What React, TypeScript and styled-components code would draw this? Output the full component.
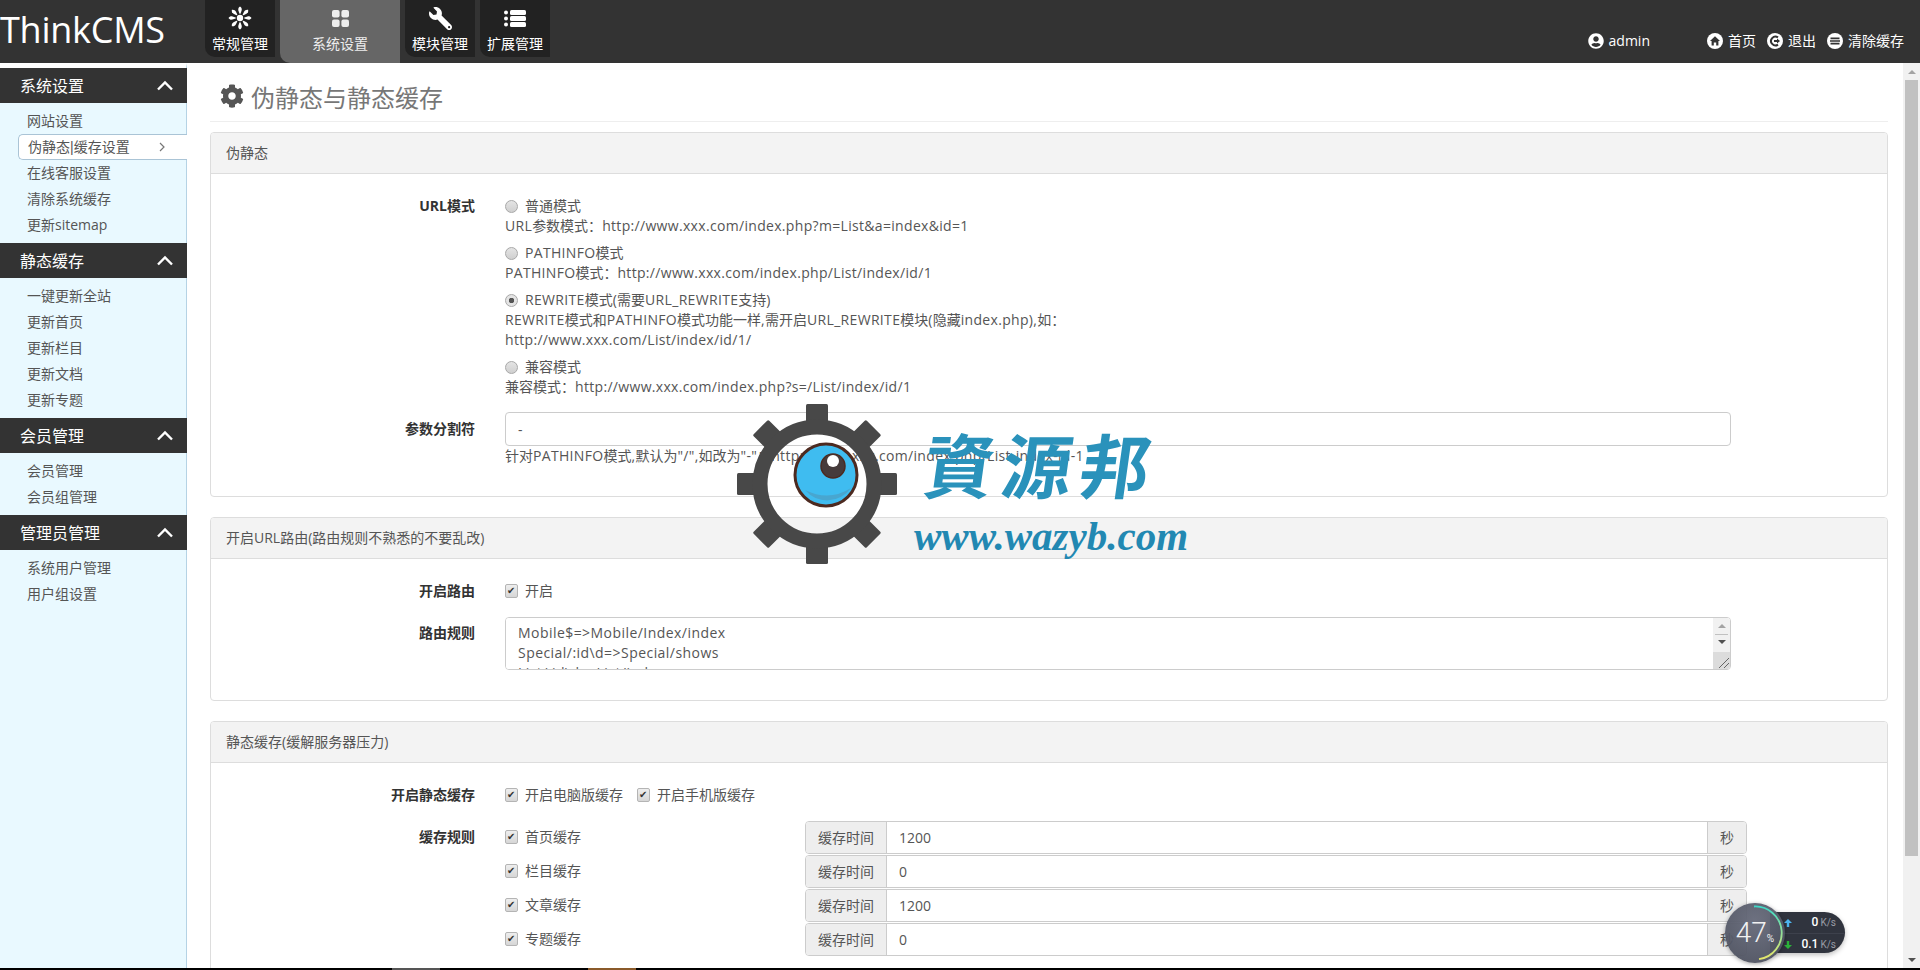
import { Fragment } from 'react'
import { createGlobalStyle, styled } from 'styled-components'
import { FaCog, FaUserCircle, FaWrench } from 'react-icons/fa'

const GlobalStyle = createGlobalStyle`
  html, body {
    margin: 0;
    height: 100%;
    overflow: hidden;
    background: #fff;
  }
  body {
    font-family: "Open Sans", "Noto Sans CJK SC", sans-serif;
    font-size: 14px;
    line-height: 20px;
    color: #555;
  }
  * {
    box-sizing: border-box;
  }
`

const Page = styled.div`
  position: relative;
  display: flex;
  flex-direction: column;
  height: 970px;
  overflow: hidden;
`

const Header = styled.header`
  display: flex;
  flex: none;
  height: 63px;
  background: #333;
  color: #fff;
`

const Logo = styled.div`
  flex: none;
  width: 205px;
  font-size: 36px;
  line-height: 59px;
  letter-spacing: -0.25px;
  color: #fff;
`

const NavTabs = styled.nav`
  display: flex;
  align-items: flex-start;
  gap: 5px;
`

const NavTab = styled.a<{ $active?: boolean }>`
  display: flex;
  flex-direction: column;
  align-items: center;
  width: ${({ $active }) => ($active ? '120px' : '70px')};
  height: ${({ $active }) => ($active ? '63px' : '57px')};
  padding-top: 6px;
  background: ${({ $active }) => ($active ? '#666' : '#222')};
  border-bottom-left-radius: 10px;
  color: ${({ $active }) => ($active ? '#eee' : '#fff')};
  font-size: 14px;
  line-height: 20px;
`

const NavIcon = styled.span`
  display: flex;
  align-items: center;
  justify-content: center;
  height: 24px;
  margin-bottom: 4px;
`

const FlippedWrench = styled(FaWrench)`
  transform: scaleX(-1);
`

const UserMenu = styled.div`
  display: flex;
  align-items: center;
  height: 20px;
  margin: 31px 16px 0 auto;
  color: #fff;
`

const MenuLink = styled.a<{ $gap?: number }>`
  display: flex;
  align-items: center;
  gap: 5px;
  margin-left: ${({ $gap }) => $gap ?? 11}px;
`

const Body = styled.div`
  display: flex;
  flex: 1;
  min-height: 0;
`

const Sidebar = styled.aside`
  flex: none;
  width: 187px;
  background: #e9f9ff;
  border-top: 5px solid #fff;
  border-right: 1px solid #b5d3e5;
`

const SideHeading = styled.div`
  display: flex;
  align-items: center;
  justify-content: space-between;
  height: 35px;
  margin-right: -1px;
  padding: 0 13px 0 20px;
  background: #333;
  color: #fff;
  font-size: 16px;
`

const SideList = styled.ul`
  list-style: none;
  margin: 0;
  padding: 5px 0;
`

const SideItem = styled.li<{ $active?: boolean }>`
  display: flex;
  align-items: center;
  justify-content: space-between;
  height: 26px;
  margin-left: ${({ $active }) => ($active ? '18px' : '27px')};
  margin-right: ${({ $active }) => ($active ? '-1px' : '0')};
  padding: ${({ $active }) => ($active ? '0 22px 0 9px' : '0')};
  color: #555;
  background: ${({ $active }) => ($active ? '#fff' : 'transparent')};
  border: ${({ $active }) => ($active ? '1px solid #aac4d6' : '0')};
  border-right: 0;
  border-radius: 5px 0 0 5px;
  font-family: ${({ $active }) =>
    $active ? '"Liberation Sans", "Noto Sans CJK SC", sans-serif' : 'inherit'};
`

const Main = styled.main`
  flex: 1;
  min-width: 0;
  overflow: hidden;
  padding: 0 15px 0 23px;
`

const PageTitle = styled.h1`
  display: flex;
  align-items: center;
  gap: 7px;
  height: 59px;
  margin: 0 0 10px;
  padding: 12px 0 0 10px;
  border-bottom: 1px solid #eee;
  color: #777;
  font-size: 24px;
  font-weight: 400;
  svg {
    margin-top: -5px;
    color: #555;
    font-size: 24px;
  }
`

const Card = styled.section`
  margin-bottom: 20px;
  background: #fff;
  border: 1px solid #ddd;
  border-radius: 4px;
`

const CardHeading = styled.div`
  height: 41px;
  padding: 0 15px;
  background: #f3f3f3;
  border-bottom: 1px solid #ddd;
  border-radius: 3px 3px 0 0;
  line-height: 40px;
`

const CardBody = styled.div<{ $gap: number }>`
  display: flex;
  flex-direction: column;
  gap: ${({ $gap }) => $gap}px;
  padding: 22px 0 30px;
`

const FormRow = styled.div`
  display: grid;
  grid-template-columns: 264px 1fr;
  column-gap: 30px;
`

const FieldLabel = styled.label<{ $top?: number }>`
  padding-top: ${({ $top }) => $top ?? 0}px;
  color: #333;
  font-weight: 700;
  text-align: right;
`

const Latin = styled.span`
  letter-spacing: 0.32px;
`

const Options = styled.div`
  display: flex;
  flex-direction: column;
  gap: 7px;
`

const Check = styled.label`
  display: flex;
  align-items: center;
  gap: 7px;
  height: 20px;
`

const CheckLine = styled.div`
  display: flex;
  gap: 14px;
`

const Radio = styled.input.attrs({ type: 'radio', readOnly: true })`
  appearance: none;
  flex: none;
  width: 13px;
  height: 13px;
  margin: 0;
  border: 1px solid #a8a8a8;
  border-radius: 50%;
  background: ${({ checked }) =>
    checked
      ? 'radial-gradient(circle, #555 0 2.5px, #e4e4e4 3px)'
      : 'linear-gradient(#e4e4e4, #cfcfcf)'};
`

const Checkbox = styled.input.attrs({ type: 'checkbox', readOnly: true, checked: true })`
  appearance: none;
  position: relative;
  flex: none;
  width: 13px;
  height: 14px;
  margin: 0;
  border: 1px solid #b4b4b4;
  border-radius: 2px;
  background: linear-gradient(#eee, #d6d6d6);
  &::after {
    content: '✔';
    position: absolute;
    top: 0;
    left: 1px;
    color: #333;
    font-size: 10px;
    line-height: 12px;
  }
`

const TextInput = styled.input`
  display: block;
  width: 1226px;
  height: 34px;
  padding: 0 12px;
  border: 1px solid #ccc;
  border-radius: 4px;
  color: #555;
  font: inherit;
`

const AreaBox = styled.div`
  position: relative;
  width: 1226px;
  height: 53px;
  overflow: hidden;
  border: 1px solid #ccc;
  border-radius: 4px;
`

const Area = styled.textarea`
  display: block;
  width: 100%;
  height: 100%;
  padding: 5px 30px 0 12px;
  overflow: hidden;
  resize: none;
  border: 0;
  outline: 0;
  color: #555;
  font: inherit;
  letter-spacing: 0.45px;
`

const AreaRail = styled.div`
  position: absolute;
  top: 0;
  right: 0;
  bottom: 0;
  display: flex;
  flex-direction: column;
  align-items: center;
  width: 17px;
  background: #f1f1f1;
`

const RailUp = styled.span`
  width: 0;
  margin-top: 6px;
  border: 4px solid transparent;
  border-top: 0;
  border-bottom: 4px solid #a3a3a3;
`

const RailThumb = styled.span`
  width: 13px;
  height: 1px;
  margin-top: 6px;
  background: #c1c1c1;
`

const RailDown = styled.span`
  width: 0;
  margin-top: 5px;
  border: 4px solid transparent;
  border-bottom: 0;
  border-top: 4px solid #505050;
`

const RailGrip = styled.span`
  width: 17px;
  height: 17px;
  margin-top: auto;
  background: #dcdcdc;
  color: #666;
  svg {
    display: block;
  }
`

const RuleGrid = styled.div`
  display: grid;
  grid-template-columns: 300px 942px;
  row-gap: 1px;
  align-items: center;
`

const RuleCheck = styled(Check)`
  margin-top: -2px;
`

const InputGroup = styled.div`
  display: flex;
  height: 33px;
  border: 1px solid #ccc;
  border-radius: 4px;
`

const Addon = styled.span<{ $wide?: boolean }>`
  flex: none;
  width: ${({ $wide }) => ($wide ? '81px' : '39px')};
  background: #eee;
  text-align: center;
  line-height: 31px;
  border-left: ${({ $wide }) => ($wide ? '0' : '1px solid #ccc')};
  border-right: ${({ $wide }) => ($wide ? '1px solid #ccc' : '0')};
  border-radius: ${({ $wide }) => ($wide ? '3px 0 0 3px' : '0 3px 3px 0')};
`

const GroupInput = styled.input`
  flex: 1;
  min-width: 0;
  padding: 0 12px;
  border: 0;
  color: #555;
  font: inherit;
`

const ScrollTrack = styled.div`
  display: flex;
  flex: none;
  flex-direction: column;
  align-items: center;
  width: 17px;
  background: #f1f1f1;
`

const TrackUp = styled.span`
  flex: none;
  width: 0;
  margin: 7px 0 6px;
  border: 4px solid transparent;
  border-top: 0;
  border-bottom: 4px solid #a3a3a3;
`

const TrackThumb = styled.span`
  flex: none;
  width: 13px;
  height: 776px;
  background: #c1c1c1;
`

const TrackDown = styled.span`
  flex: none;
  width: 0;
  margin: auto 0 6px;
  border: 4px solid transparent;
  border-bottom: 0;
  border-top: 4px solid #505050;
`

const TaskStrip = styled.div`
  display: flex;
  flex: none;
  height: 2px;
  padding-left: 392px;
  background: #000;
`

const TaskItem = styled.span<{ $color: string; $gap?: number }>`
  width: 48px;
  margin-left: ${({ $gap }) => $gap ?? 0}px;
  background: ${({ $color }) => $color};
`

const Watermark = styled.div`
  position: absolute;
  left: 737px;
  top: 404px;
  display: flex;
  pointer-events: none;
`

const Brand = styled.div`
  position: relative;
  width: 290px;
  margin-left: 17px;
`

const BrandName = styled.div`
  margin: 17px 0 0 11px;
  color: #2a92bb;
  font-family: "Noto Sans CJK TC", "Noto Sans CJK SC", sans-serif;
  font-size: 70px;
  font-weight: 700;
  line-height: 84px;
  letter-spacing: 8px;
  white-space: nowrap;
  transform: skewX(-8deg);
`

const BrandUrl = styled.div`
  margin-top: 9px;
  color: #2288b2;
  font-family: "Liberation Serif", serif;
  font-size: 41px;
  font-style: italic;
  font-weight: 700;
  line-height: 44px;
  white-space: nowrap;
`

const SpeedWidget = styled.div`
  position: absolute;
  left: 1725px;
  top: 903px;
  width: 120px;
  height: 60px;
`

const SpeedPill = styled.div`
  position: absolute;
  top: 9px;
  right: 0;
  display: flex;
  flex-direction: column;
  width: 75px;
  height: 41px;
  padding-left: 14px;
  background: #30343e;
  border-radius: 0 21px 21px 0;
  box-shadow: 0 2px 5px rgba(0, 0, 0, 0.25);
`

const SpeedRow = styled.div`
  display: flex;
  flex: 1;
  align-items: center;
  justify-content: space-between;
  padding-right: 9px;
  color: #fff;
  font-family: Roboto, sans-serif;
  font-size: 12px;
  & + & {
    border-top: 1px solid #3d414c;
  }
`

const SpeedValue = styled.span`
  font-weight: 500;
  small {
    margin-left: 2px;
    color: #9a9da6;
    font-size: 10px;
    font-weight: 400;
  }
`

const LoadDial = styled.div`
  position: absolute;
  top: 0;
  left: 0;
  display: flex;
  align-items: center;
  justify-content: center;
  width: 60px;
  height: 60px;
  background: radial-gradient(circle at 50% 30%, rgba(100, 104, 120, 0.94), rgba(72, 76, 90, 0.94));
  border-radius: 50%;
  box-shadow: 0 1px 4px rgba(0, 0, 0, 0.35);
  color: #f2f2f2;
  font-family: Roboto, sans-serif;
  svg {
    position: absolute;
    inset: 0;
  }
`

const LoadNumber = styled.span`
  font-size: 28px;
  font-weight: 300;
  line-height: 1;
  small {
    font-size: 10px;
    font-weight: 400;
  }
`

const sideGroups = [
  { title: '系统设置', items: ['网站设置', '伪静态|缓存设置', '在线客服设置', '清除系统缓存', '更新sitemap'] },
  { title: '静态缓存', items: ['一键更新全站', '更新首页', '更新栏目', '更新文档', '更新专题'] },
  { title: '会员管理', items: ['会员管理', '会员组管理'] },
  { title: '管理员管理', items: ['系统用户管理', '用户组设置'] },
]

const urlModes = [
  { name: '普通模式', help: ['URL参数模式：http://www.xxx.com/index.php?m=List&a=index&id=1'] },
  { name: 'PATHINFO模式', help: ['PATHINFO模式：http://www.xxx.com/index.php/List/index/id/1'] },
  {
    name: 'REWRITE模式(需要URL_REWRITE支持)',
    checked: true,
    help: [
      'REWRITE模式和PATHINFO模式功能一样,需开启URL_REWRITE模块(隐藏index.php),如：',
      'http://www.xxx.com/List/index/id/1/',
    ],
  },
  { name: '兼容模式', help: ['兼容模式：http://www.xxx.com/index.php?s=/List/index/id/1'] },
]

const cacheRules = [
  { name: '首页缓存', value: '1200' },
  { name: '栏目缓存', value: '0' },
  { name: '文章缓存', value: '1200' },
  { name: '专题缓存', value: '0' },
]

const routeRules = `Mobile$=>Mobile/Index/index
Special/:id\\d=>Special/shows
List/:id\\d=>List/index`

// latin runs render wider in the original than Open Sans does here
const Mixed = ({ text }: { text: string }) => (
  <>
    {text.split(/([\x20-\x7e]+)/).map((part, i) =>
      i % 2 ? <Latin key={i}>{part}</Latin> : part
    )}
  </>
)

const SpinIcon = () => (
  <svg width="24" height="24" viewBox="0 0 24 24" fill="currentColor">
    <circle cx="12" cy="12" r="3.2" />
    {[0, 45, 90, 135, 180, 225, 270, 315].map((a) => (
      <path
        key={a}
        d="M12 0.5 C13.6 1.5 14 3 13.6 4.5 L12.6 7.6 Q12 8 11.4 7.6 L10.4 4.5 C10 3 10.4 1.5 12 0.5 Z"
        transform={`rotate(${a} 12 12)`}
      />
    ))}
  </svg>
)

const GridIcon = () => (
  <svg width="17" height="17" viewBox="0 0 17 17" fill="currentColor">
    <rect x="0" y="0" width="7.6" height="7.6" rx="2" />
    <rect x="9.4" y="0" width="7.6" height="7.6" rx="2" />
    <rect x="0" y="9.4" width="7.6" height="7.6" rx="2" />
    <rect x="9.4" y="9.4" width="7.6" height="7.6" rx="2" />
  </svg>
)

const ListIcon = () => (
  <svg width="22" height="17" viewBox="0 0 22 17" fill="currentColor">
    {[0, 6, 12].map((y) => (
      <Fragment key={y}>
        <circle cx="2" cy={y + 2.5} r="2" />
        <rect x="6" y={y} width="16" height="5" rx="1.5" />
      </Fragment>
    ))}
  </svg>
)

const HomeIcon = () => (
  <svg width="16" height="16" viewBox="0 0 16 16">
    <circle cx="8" cy="8" r="8" fill="#fff" />
    <path d="M8 3.2 L13 8 H11.4 V12.4 H9.2 V9.4 H6.8 V12.4 H4.6 V8 H3 Z" fill="#333" />
  </svg>
)

const LogoutIcon = () => (
  <svg width="16" height="16" viewBox="0 0 16 16">
    <circle cx="8" cy="8" r="8" fill="#fff" />
    <path d="M11 4.4 A4.4 4.4 0 1 0 11 11.6" fill="none" stroke="#333" strokeWidth="2" />
    <path d="M7 7 H10 V5.4 L13 8 L10 10.6 V9 H7 Z" fill="#333" />
  </svg>
)

const CacheIcon = () => (
  <svg width="16" height="16" viewBox="0 0 16 16">
    <circle cx="8" cy="8" r="8" fill="#fff" />
    <path d="M3.5 4.6 H12.5 V6.2 H3.5 Z M3 7.2 H13 V8.8 H3 Z M3.5 9.8 H12.5 V11.4 H3.5 Z" fill="#333" />
  </svg>
)

const ChevronUp = () => (
  <svg width="18" height="11" viewBox="0 0 18 11" fill="none" stroke="#fff" strokeWidth="2.4">
    <path d="M2 9.5 L9 2.5 L16 9.5" />
  </svg>
)

const ChevronRight = () => (
  <svg width="6" height="10" viewBox="0 0 6 10" fill="none" stroke="#777" strokeWidth="1.2">
    <path d="M1 1 L5 5 L1 9" />
  </svg>
)

const GearMark = () => (
  <svg width="160" height="160" viewBox="0 0 160 160">
    {[0, 45, 90, 135, 180, 225, 270, 315].map((a) => (
      <rect key={a} x="69" y="0" width="22" height="24" rx="1.5" fill="#484848" transform={`rotate(${a} 80 80)`} />
    ))}
    <circle cx="80" cy="80" r="57" fill="none" stroke="#484848" strokeWidth="15" />
    <circle cx="89" cy="71" r="31" fill="#3fbcf0" stroke="#4d2a20" strokeWidth="3" />
    <path d="M68 86 A29 29 0 0 0 114 84 Q92 98 68 86 Z" fill="#48a6d0" />
    <circle cx="96" cy="62" r="12" fill="#463b3b" stroke="#4d2a20" strokeWidth="1.5" />
    <circle cx="96" cy="57" r="6" fill="#fff" />
  </svg>
)

const LoadRing = () => (
  <svg width="60" height="60" viewBox="0 0 60 60" fill="none">
    <defs>
      <linearGradient id="loadRing" x1="0" y1="0" x2="0" y2="1">
        <stop offset="0" stopColor="#3ed8c6" />
        <stop offset="1" stopColor="#e6e66a" />
      </linearGradient>
    </defs>
    <path d="M29 3.5 A26.5 26.5 0 0 1 34 56.2" stroke="url(#loadRing)" strokeWidth="1.8" />
  </svg>
)

const SpeedArrow = ({ up }: { up?: boolean }) => (
  <svg width="8" height="8" viewBox="0 0 8 8" fill={up ? '#4db4ee' : '#2bb33a'}>
    <path d={up ? 'M4 0 L8 4 H5.2 V8 H2.8 V4 H0 Z' : 'M4 8 L8 4 H5.2 V0 H2.8 V4 H0 Z'} />
  </svg>
)

export default function App() {
  return (
    <Page>
      <GlobalStyle />
      <Header>
        <Logo>ThinkCMS</Logo>
        <NavTabs>
          <NavTab>
            <NavIcon><SpinIcon /></NavIcon>
            常规管理
          </NavTab>
          <NavTab $active>
            <NavIcon><GridIcon /></NavIcon>
            系统设置
          </NavTab>
          <NavTab>
            <NavIcon><FlippedWrench size={23} /></NavIcon>
            模块管理
          </NavTab>
          <NavTab>
            <NavIcon><ListIcon /></NavIcon>
            扩展管理
          </NavTab>
        </NavTabs>
        <UserMenu>
          <MenuLink><FaUserCircle size={16} />admin</MenuLink>
          <MenuLink $gap={57}><HomeIcon />首页</MenuLink>
          <MenuLink><LogoutIcon />退出</MenuLink>
          <MenuLink><CacheIcon />清除缓存</MenuLink>
        </UserMenu>
      </Header>

      <Body>
        <Sidebar>
          {sideGroups.map((group) => (
            <div key={group.title}>
              <SideHeading>
                {group.title}
                <ChevronUp />
              </SideHeading>
              <SideList>
                {group.items.map((item) => {
                  const active = item === '伪静态|缓存设置'
                  return (
                    <SideItem key={item} $active={active}>
                      {item}
                      {active && <ChevronRight />}
                    </SideItem>
                  )
                })}
              </SideList>
            </div>
          ))}
        </Sidebar>

        <Main>
          <PageTitle>
            <FaCog />
            伪静态与静态缓存
          </PageTitle>

          <Card>
            <CardHeading>伪静态</CardHeading>
            <CardBody $gap={15}>
              <FormRow>
                <FieldLabel>URL模式</FieldLabel>
                <Options>
                  {urlModes.map((mode) => (
                    <div key={mode.name}>
                      <Check>
                        <Radio name="url" checked={!!mode.checked} />
                        <span><Mixed text={mode.name} /></span>
                      </Check>
                      {mode.help.map((line) => (
                        <div key={line}><Mixed text={line} /></div>
                      ))}
                    </div>
                  ))}
                </Options>
              </FormRow>
              <FormRow>
                <FieldLabel $top={7}>参数分割符</FieldLabel>
                <div>
                  <TextInput defaultValue="-" />
                  <Mixed text={'针对PATHINFO模式,默认为"/",如改为"-"：http://www.xxx.com/index.php/List-index-id-1'} />
                </div>
              </FormRow>
            </CardBody>
          </Card>

          <Card>
            <CardHeading>开启URL路由(路由规则不熟悉的不要乱改)</CardHeading>
            <CardBody $gap={16}>
              <FormRow>
                <FieldLabel>开启路由</FieldLabel>
                <Check>
                  <Checkbox />
                  开启
                </Check>
              </FormRow>
              <FormRow>
                <FieldLabel $top={6}>路由规则</FieldLabel>
                <AreaBox>
                  <Area defaultValue={routeRules} />
                  <AreaRail>
                    <RailUp />
                    <RailThumb />
                    <RailDown />
                    <RailGrip>
                      <svg width="17" height="17" viewBox="0 0 17 17" fill="none" stroke="currentColor">
                        <path d="M6 16 L16 6 M11 16 L16 11" />
                      </svg>
                    </RailGrip>
                  </AreaRail>
                </AreaBox>
              </FormRow>
            </CardBody>
          </Card>

          <Card>
            <CardHeading>静态缓存(缓解服务器压力)</CardHeading>
            <CardBody $gap={16}>
              <FormRow>
                <FieldLabel>开启静态缓存</FieldLabel>
                <CheckLine>
                  <Check>
                    <Checkbox />
                    开启电脑版缓存
                  </Check>
                  <Check>
                    <Checkbox />
                    开启手机版缓存
                  </Check>
                </CheckLine>
              </FormRow>
              <FormRow>
                <FieldLabel $top={6}>缓存规则</FieldLabel>
                <RuleGrid>
                  {cacheRules.map((rule) => (
                    <Fragment key={rule.name}>
                      <RuleCheck>
                        <Checkbox />
                        {rule.name}
                      </RuleCheck>
                      <InputGroup>
                        <Addon $wide>缓存时间</Addon>
                        <GroupInput defaultValue={rule.value} />
                        <Addon>秒</Addon>
                      </InputGroup>
                    </Fragment>
                  ))}
                </RuleGrid>
              </FormRow>
            </CardBody>
          </Card>
        </Main>

        <ScrollTrack>
          <TrackUp />
          <TrackThumb />
          <TrackDown />
        </ScrollTrack>
      </Body>

      <TaskStrip>
        <TaskItem $color="#555" />
        <TaskItem $color="#8a5a2a" $gap={148} />
      </TaskStrip>

      <Watermark>
        <GearMark />
        <Brand>
          <BrandName>資源邦</BrandName>
          <BrandUrl>www.wazyb.com</BrandUrl>
        </Brand>
      </Watermark>

      <SpeedWidget>
        <SpeedPill>
          <SpeedRow>
            <SpeedArrow up />
            <SpeedValue>0<small>K/s</small></SpeedValue>
          </SpeedRow>
          <SpeedRow>
            <SpeedArrow />
            <SpeedValue>0.1<small>K/s</small></SpeedValue>
          </SpeedRow>
        </SpeedPill>
        <LoadDial>
          <LoadRing />
          <LoadNumber>47<small>%</small></LoadNumber>
        </LoadDial>
      </SpeedWidget>
    </Page>
  )
}
